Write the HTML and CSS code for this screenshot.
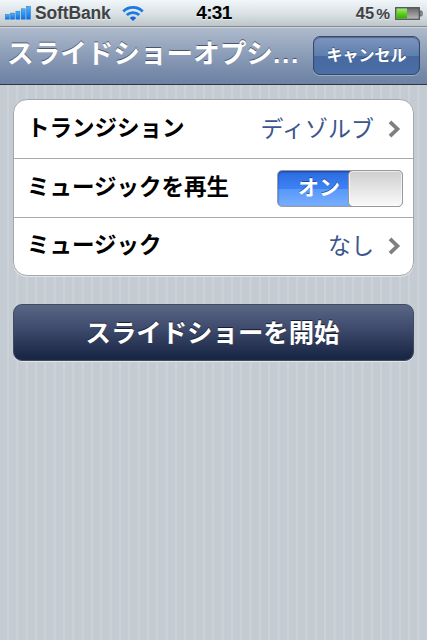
FILE: index.html
```html
<!DOCTYPE html>
<html lang="ja">
<head>
  <meta charset="UTF-8">
  <meta name="viewport" content="width=device-width, initial-scale=1.0">
  <title>スライドショーオプション</title>
  <link rel="stylesheet" href="styles.css">
</head>
<body>

  <!-- Status bar -->
  <div class="status">
    <div class="carrier">
      <svg class="signal" width="26" height="14" viewBox="0 0 26 14">
        <defs>
          <linearGradient id="blue" x1="0" y1="0" x2="0" y2="1">
            <stop offset="0" stop-color="#4db5f8"/>
            <stop offset="1" stop-color="#0b6fe8"/>
          </linearGradient>
        </defs>
        <g fill="url(#blue)" stroke="#2375c9" stroke-width=".5">
          <rect x=".3" y="8.5" width="4" height="4.7"/>
          <rect x="5.6" y="7.1" width="4" height="6.1"/>
          <rect x="10.9" y="5.2" width="4" height="8"/>
          <rect x="16.2" y="2.8" width="4" height="10.4"/>
          <rect x="21.5" y=".3" width="4" height="12.9"/>
        </g>
      </svg>
      <span class="name">SoftBank</span>
      <svg class="wifi" width="22" height="17" viewBox="0 0 22 17">
        <g fill="none" stroke="#1b79e6" stroke-width="2.8">
          <path d="M1.3 6.4a13.7 13.7 0 0 1 19.4 0"/>
          <path d="M4.8 10.1a8.8 8.8 0 0 1 12.4 0"/>
        </g>
        <path d="M11 16.1l-3.2-3.2a4.5 4.5 0 0 1 6.4 0z" fill="#1266dc"/>
      </svg>
    </div>
    <div class="time">4:31</div>
    <div class="power">
      <span class="percent">45<span class="sign">%</span></span>
      <svg width="28" height="13" viewBox="0 0 28 13">
        <defs>
          <linearGradient id="green" x1="0" y1="0" x2="0" y2="1">
            <stop offset="0" stop-color="#a5ec78"/>
            <stop offset=".45" stop-color="#62d522"/>
            <stop offset="1" stop-color="#37a805"/>
          </linearGradient>
          <linearGradient id="empty" x1="0" y1="0" x2="0" y2="1">
            <stop offset="0" stop-color="#666"/>
            <stop offset="1" stop-color="#bbb"/>
          </linearGradient>
        </defs>
        <rect x=".7" y=".7" width="23.6" height="11.6" fill="url(#empty)" stroke="#4d5054" stroke-width="1.2"/>
        <rect x="1.5" y="1.5" width="10.5" height="10" fill="url(#green)"/>
        <path d="M25 4h1.2q1 0 1 1v3q0 1-1 1H25z" fill="#999da3" stroke="#505358" stroke-width=".8"/>
      </svg>
    </div>
  </div>

  <!-- Navigation bar -->
  <div class="navbar">
    <h1>スライドショーオプシ<span class="dots">...</span></h1>
    <button type="button" class="cancel">キャンセル</button>
  </div>

  <div class="content">
    <div class="group">
      <div class="row">
        <span class="label">トランジション</span>
        <span class="value">ディゾルブ</span>
        <svg class="chevron" width="13" height="18" viewBox="0 0 13 18"><path d="M2 1.8L9.4 9 2 16.2" fill="none" stroke="#7f7f7f" stroke-width="3.8"/></svg>
      </div>
      <div class="row">
        <span class="label">ミュージックを再生</span>
        <div class="switch"><span class="on">オン</span><span class="knob"></span></div>
      </div>
      <div class="row">
        <span class="label">ミュージック</span>
        <span class="value">なし</span>
        <svg class="chevron" width="13" height="18" viewBox="0 0 13 18"><path d="M2 1.8L9.4 9 2 16.2" fill="none" stroke="#7f7f7f" stroke-width="3.8"/></svg>
      </div>
    </div>

    <button type="button" class="start">スライドショーを開始</button>
  </div>

</body>
</html>
```
FILE: styles.css
```css
* {
  box-sizing: border-box;
}

body {
  margin: 0;
  height: 100vh;
  overflow: hidden;
  font-family: "Liberation Sans", "Noto Sans CJK JP", sans-serif;
  white-space: nowrap;
  background: repeating-linear-gradient(to right, #c4cbd2 0, #c4cbd2 6.67px, #cbd2d8 7.3px, #cbd2d8 8.7px, #c4cbd2 9.33px);
}

.status {
  display: grid;
  grid-template-columns: 1fr auto 1fr;
  align-items: center;
  height: 26px;
  padding: 0 4px 0 5px;
  background: linear-gradient(#f0f6f9, #dce3e6 50%, #bfc6c9);
  font-weight: bold;
  color: #3f4246;
  text-shadow: 0 1px 0 rgba(255, 255, 255, 0.6);
}

.carrier, .power {
  display: flex;
  align-items: center;
}

.name {
  margin: 0 11px 0 4px;
  font-size: 17.5px;
  letter-spacing: -0.15px;
}

.time {
  font-size: 19px;
  letter-spacing: -0.6px;
  color: #000;
}

.power {
  justify-content: flex-end;
}

.percent {
  margin-right: 5px;
  font-size: 16.5px;
}

.sign {
  margin-left: 2px;
  font-size: 15.5px;
}

.navbar {
  display: flex;
  justify-content: space-between;
  align-items: center;
  height: 59px;
  padding: 0 7px 1px;
  border-top: 1px solid #83888f;
  border-bottom: 1px solid #2e3642;
  background: linear-gradient(#b0bccd, #8a9cb7 50%, #7488a8 85%, #6d83a4);
  box-shadow: inset 0 1px 0 #cdd5df;
}

h1 {
  margin: 0;
  padding-bottom: 2px;
  font-size: 26.6px;
  line-height: 40px;
  color: #fff;
  text-shadow: 0 -1px 0 rgba(40, 50, 70, 0.7);
}

.dots {
  letter-spacing: 1.6px;
}

button {
  font-family: inherit;
  font-weight: bold;
  color: #fff;
}

.cancel {
  width: 107px;
  height: 39px;
  padding: 0 0 2px;
  border: 1px solid #34496d;
  border-radius: 7px;
  background: linear-gradient(#7d96bd, #5f7fae 50%, #48699e 51%, #4a6ea6);
  box-shadow: inset 0 1px 1px rgba(40, 55, 85, 0.5), 0 1px 0 rgba(255, 255, 255, 0.3);
  font-size: 16px;
  text-shadow: 0 -1px 0 rgba(30, 45, 80, 0.6);
}

.content {
  padding: 14px 13px;
}

.group {
  border: 1px solid #a4a8ab;
  border-radius: 14px;
  background: #fff;
  box-shadow: 0 1px 0 #e1e5e8;
}

.row {
  display: flex;
  align-items: center;
  height: 59px;
  padding: 0 10px 0 13px;
  border-bottom: 1px solid #a9a9a9;
}

.row:last-child {
  height: 57px;
  padding-bottom: 1px;
  border-bottom: none;
}

.label {
  flex: 1;
  font-size: 22.5px;
  font-weight: bold;
  line-height: 32px;
  color: #000;
}

.value {
  margin-right: 14px;
  font-size: 23px;
  line-height: 32px;
  color: #3b568c;
}

.chevron {
  margin-right: 2px;
}

.switch {
  display: flex;
  width: 126px;
  height: 37px;
  border: 1px solid #989ca3;
  border-radius: 5px;
  background: linear-gradient(#2b6be0, #3d82f4 50%, #5797fa 51%, #78aefd);
  box-shadow: inset 0 1px 2px rgba(10, 40, 120, 0.6);
}

.on {
  flex: 1;
  padding: 0 9px 2px 0;
  text-align: right;
  font-size: 21px;
  font-weight: bold;
  line-height: 33px;
  color: #fff;
  text-shadow: 0 -1px 0 rgba(20, 50, 120, 0.7);
}

.knob {
  width: 55px;
  margin: -1px;
  border: 1px solid #999;
  border-radius: 5px;
  background: linear-gradient(#cecece, #fafafa);
  box-shadow: inset 0 0 0 1px rgba(255, 255, 255, 0.6);
}

.start {
  display: block;
  width: 100%;
  height: 57px;
  margin-top: 28px;
  padding: 0 2px 4px 0;
  border: 1px solid #414b5e;
  border-radius: 9px;
  background: linear-gradient(#5a6686, #3c496a 45%, #1a2645 95%);
  box-shadow: 0 1px 0 #e1e5e8;
  font-size: 25.4px;
  text-shadow: 0 -1px 0 rgba(0, 0, 0, 0.6);
}
```
